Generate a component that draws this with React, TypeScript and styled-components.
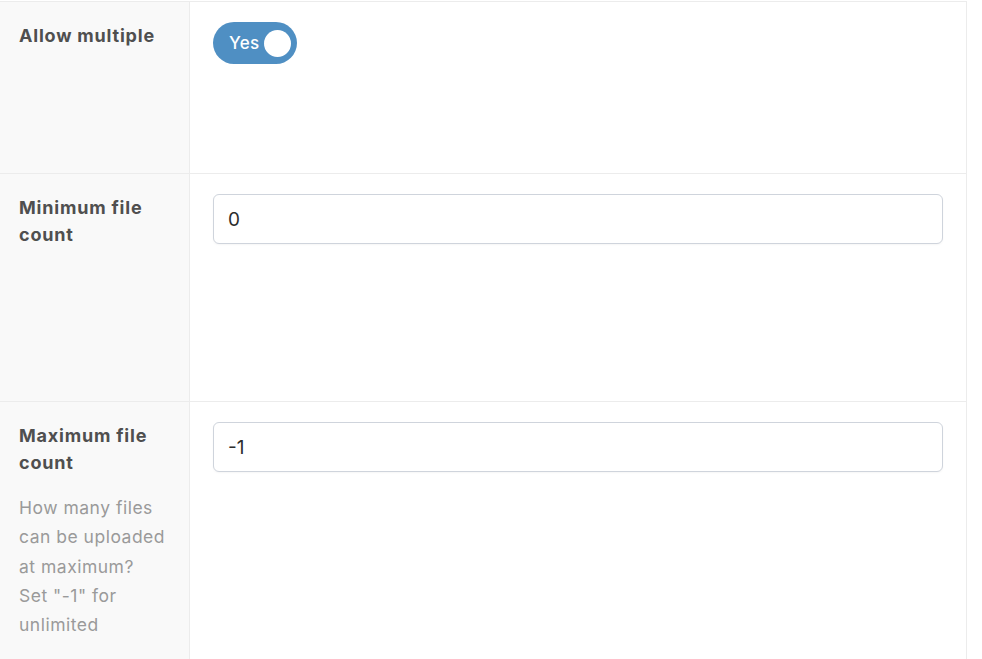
import styled, { createGlobalStyle } from "styled-components"

const GlobalStyle = createGlobalStyle`
    html, body {
        margin: 0;
        padding: 0;
        background: #ffffff;
    }

    body {
        font-family: Inter, "Noto Sans", "Liberation Sans", sans-serif;
        -webkit-font-smoothing: antialiased;
    }
`

const Table = styled.div`
    width: 967px;
    margin-top: 1px;
    border-top: 1px solid #ececec;
    border-right: 1px solid #ececec;
    box-sizing: border-box;
`

const Row = styled.div<{ minHeight: number }>`
    display: grid;
    grid-template-columns: 190px 1fr;
    min-height: ${props => props.minHeight}px;
    border-bottom: 1px solid #ececec;
    box-sizing: border-box;
`

const LabelCell = styled.div`
    background-color: #f9f9f9;
    border-right: 1px solid #ececec;
    padding: 20px 18px 20px 19px;
`

const Label = styled.div`
    font-size: 18px;
    font-weight: 700;
    line-height: 27px;
    color: #4f4f4f;
    letter-spacing: 0.8px;
`

const Help = styled.div`
    max-width: 147px;
    margin-top: 17px;
    font-size: 17.5px;
    line-height: 29.3px;
    color: #9a9a9a;
    letter-spacing: 0.5px;
`

const FieldCell = styled.div`
    padding: 20px 23px 20px 23px;
`

const Toggle = styled.div`
    width: 84px;
    height: 42px;
    border-radius: 21px;
    background-color: #4f8fc3;
    display: flex;
    align-items: center;
    justify-content: space-between;
    padding: 0 6px 0 16px;
    box-sizing: border-box;

    .toggle__text {
        color: #ffffff;
        font-size: 17px;
        font-weight: 500;
        letter-spacing: 0.3px;
    }

    .toggle__knob {
        width: 27px;
        height: 27px;
        border-radius: 50%;
        background-color: #ffffff;
    }
`

const Input = styled.input`
    display: block;
    width: 100%;
    height: 50px;
    box-sizing: border-box;
    border: 1px solid #cfd4dc;
    border-radius: 6px;
    padding: 0 14px;
    font-family: inherit;
    font-size: 19px;
    color: #2d2d2d;
    background: #ffffff;
    box-shadow: 0 1px 2px rgba(0, 0, 0, 0.04);
    outline: none;
`

const App = () => {
    return (
        <>
            <GlobalStyle />
            <Table>
                <Row minHeight={172}>
                    <LabelCell>
                        <Label>Allow multiple</Label>
                    </LabelCell>
                    <FieldCell>
                        <Toggle>
                            <span className="toggle__text">Yes</span>
                            <span className="toggle__knob" />
                        </Toggle>
                    </FieldCell>
                </Row>

                <Row minHeight={228}>
                    <LabelCell>
                        <Label>Minimum file count</Label>
                    </LabelCell>
                    <FieldCell>
                        <Input defaultValue="0" />
                    </FieldCell>
                </Row>

                <Row minHeight={300}>
                    <LabelCell>
                        <Label>Maximum file count</Label>
                        <Help>How many files can be uploaded at maximum? Set "-1" for unlimited</Help>
                    </LabelCell>
                    <FieldCell>
                        <Input defaultValue="-1" />
                    </FieldCell>
                </Row>
            </Table>
        </>
    )
}

export default App
